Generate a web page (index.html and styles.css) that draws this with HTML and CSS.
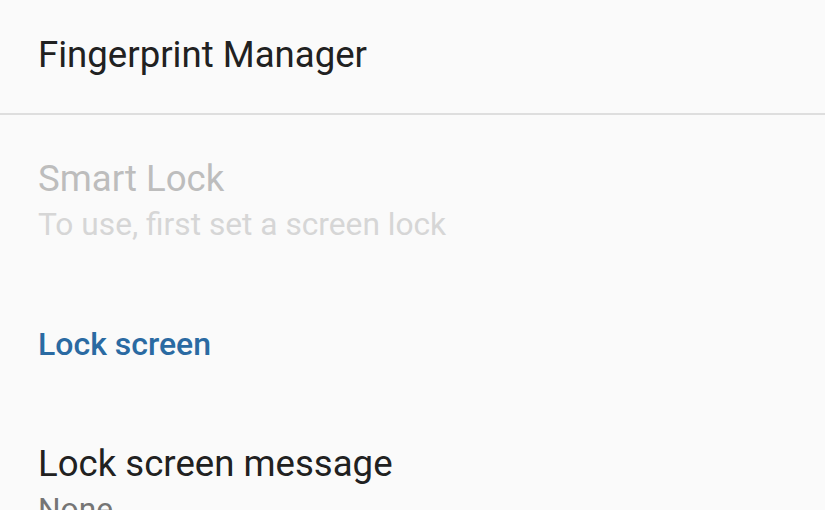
FILE: index.html
```html
<!DOCTYPE html>
<html lang="en">
<head>
    <meta charset="UTF-8">
    <meta name="viewport" content="width=device-width, initial-scale=1.0">
    <title>Security</title>
    <link rel="stylesheet" href="styles.css">
</head>
<body>
    <div class="pref-list">
        <div class="pref pref-top">
            <div class="pref-title">Fingerprint Manager</div>
        </div>
        <div class="divider"></div>
        <div class="pref pref-disabled">
            <div class="pref-title">Smart Lock</div>
            <div class="pref-summary">To use, first set a screen lock</div>
        </div>
        <div class="category">Lock screen</div>
        <div class="pref pref-after-category">
            <div class="pref-title">Lock screen message</div>
            <div class="pref-summary">None</div>
        </div>
    </div>
</body>
</html>
```

FILE: styles.css
```css
body {
    margin: 0;
    background-color: #fafafa;
    font-family: Roboto, "Noto Sans", sans-serif;
    overflow: hidden;
}
.pref-list {
    display: flex;
    flex-direction: column;
}
.pref {
    padding: 0 38px;
}
.pref-title {
    font-size: 36.6px;
    line-height: 42px;
    color: #212121;
}
.pref-summary {
    margin-top: 3px;
    font-size: 31.7px;
    line-height: 44px;
    color: #757575;
}
.pref-top {
    padding-top: 34px;
    padding-bottom: 37px;
}
.divider {
    height: 2px;
    background-color: #dedede;
}
.pref-disabled {
    padding-top: 43px;
}
.pref-disabled .pref-title {
    color: #bdbdbd;
}
.pref-disabled .pref-summary {
    color: #d6d6d6;
}
.category {
    padding: 77px 38px 0;
    font-size: 32px;
    font-weight: 500;
    line-height: 40px;
    color: #2a6aa2;
}
.pref-after-category {
    padding-top: 79px;
}
```
